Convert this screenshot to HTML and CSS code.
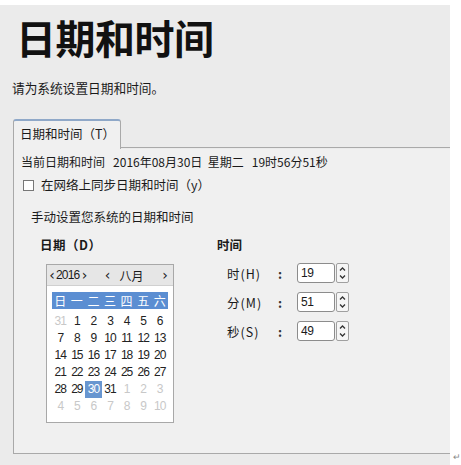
FILE: index.html
```html
<!DOCTYPE html>
<html lang="zh-CN">
<head>
<meta charset="utf-8">
<title>日期和时间</title>
<link rel="stylesheet" href="styles.css">
</head>
<body>
<div class="page">
  <div class="window">
    <h1 class="title">日期和时间</h1>
    <p class="subtitle">请为系统设置日期和时间。</p>
    <div class="tabs">
      <div class="tab">日期和时间（T）</div>
      <div class="tab-rest"></div>
    </div>
    <div class="panel">
      <div class="current">当前日期和时间&nbsp;&nbsp;&nbsp;2016年08月30日&nbsp;&nbsp;星期二&nbsp;&nbsp;&nbsp;19时56分51秒</div>
      <label class="sync"><span class="checkbox"></span><span>在网络上同步日期和时间（y）</span></label>
      <div class="manual">手动设置您系统的日期和时间</div>
      <div class="columns">
        <div class="date-col">
          <div class="heading">日期（D）</div>
          <div class="calendar">
            <div class="cal-head">
              <span class="chev">‹</span><span class="year">2016</span><span class="chev">›</span>
              <span class="chev gap">‹</span><span class="month">八月</span><span class="chev end">›</span>
            </div>
            <div class="grid weekdays">
              <span>日</span><span>一</span><span>二</span><span>三</span><span>四</span><span>五</span><span>六</span>
            </div>
            <div class="grid days">
              <span class="off">31</span><span>1</span><span>2</span><span>3</span><span>4</span><span>5</span><span>6</span>
              <span>7</span><span>8</span><span>9</span><span>10</span><span>11</span><span>12</span><span>13</span>
              <span>14</span><span>15</span><span>16</span><span>17</span><span>18</span><span>19</span><span>20</span>
              <span>21</span><span>22</span><span>23</span><span>24</span><span>25</span><span>26</span><span>27</span>
              <span>28</span><span>29</span><span class="sel">30</span><span>31</span><span class="off">1</span><span class="off">2</span><span class="off">3</span>
              <span class="off">4</span><span class="off">5</span><span class="off">6</span><span class="off">7</span><span class="off">8</span><span class="off">9</span><span class="off">10</span>
            </div>
          </div>
        </div>
        <div class="time-col">
          <div class="heading">时间</div>
          <div class="time-rows">
            <div class="trow">
              <span class="tname">时(H)</span><span class="colon">:</span>
              <span class="input">19</span>
              <span class="spin"><svg viewBox="0 0 13 20" width="13" height="20"><path d="M4 7.5 L6.5 5 L9 7.5" fill="none" stroke="#333" stroke-width="1.3"/><path d="M4 12.5 L6.5 15 L9 12.5" fill="none" stroke="#333" stroke-width="1.3"/></svg></span>
            </div>
            <div class="trow">
              <span class="tname">分(M)</span><span class="colon">:</span>
              <span class="input">51</span>
              <span class="spin"><svg viewBox="0 0 13 20" width="13" height="20"><path d="M4 7.5 L6.5 5 L9 7.5" fill="none" stroke="#333" stroke-width="1.3"/><path d="M4 12.5 L6.5 15 L9 12.5" fill="none" stroke="#333" stroke-width="1.3"/></svg></span>
            </div>
            <div class="trow">
              <span class="tname">秒(S)</span><span class="colon">:</span>
              <span class="input">49</span>
              <span class="spin"><svg viewBox="0 0 13 20" width="13" height="20"><path d="M4 7.5 L6.5 5 L9 7.5" fill="none" stroke="#333" stroke-width="1.3"/><path d="M4 12.5 L6.5 15 L9 12.5" fill="none" stroke="#333" stroke-width="1.3"/></svg></span>
            </div>
          </div>
        </div>
      </div>
    </div>
  </div>
  <span class="mark">↵</span>
</div>
</body>
</html>
```
FILE: styles.css
```css
html, body {
  margin: 0;
  padding: 0;
  background: #ffffff;
}
body {
  font-family: "Noto Sans CJK SC", "Liberation Sans", sans-serif;
  font-size: 12px;
  color: #1a1a1a;
}
.page {
  display: flex;
  align-items: flex-end;
  width: 461px;
  height: 465px;
}
.window {
  width: 452px;
  height: 460px;
  background: #ebebeb;
  box-sizing: border-box;
  padding-top: 10px;
}
.title {
  margin: 0 0 0 16px;
  font-size: 40px;
  font-weight: bold;
  line-height: 44px;
  color: #111;
  letter-spacing: -0.5px;
}
.subtitle {
  margin: 21px 0 0 12px;
  font-size: 12.7px;
  line-height: 16px;
}
.tabs {
  display: flex;
  margin-top: 23px;
  margin-left: 13px;
  height: 30px;
}
.tab {
  width: 108px;
  height: 30px;
  box-sizing: border-box;
  background: #f0f0f0;
  border: 1px solid #a9a9a9;
  border-top: 2px solid #8fa8c8;
  border-bottom: none;
  border-radius: 3px 3px 0 0;
  padding: 4px 0 0 6px;
  font-size: 12.5px;
  line-height: 18px;
  position: relative;
  z-index: 1;
}
.tab-rest {
  flex: 1;
  border-bottom: 1px solid #a9a9a9;
  height: 28px;
}
.panel {
  margin-left: 13px;
  height: 299px;
  background: #f0f0f0;
  border-left: 1px solid #a9a9a9;
  border-bottom: 1px solid #a9a9a9;
  padding: 5px 0 0 7px;
}
.current {
  line-height: 16px;
}
.sync {
  display: flex;
  align-items: center;
  margin-top: 7px;
  margin-left: 2px;
  line-height: 16px;
  font-size: 12.5px;
}
.checkbox {
  width: 11px;
  height: 11px;
  box-sizing: border-box;
  border: 1px solid #777;
  background: #fff;
  margin-right: 7px;
}
.manual {
  margin-top: 16px;
  margin-left: 10px;
  line-height: 16px;
  font-size: 12.5px;
}
.columns {
  display: flex;
  margin-top: 12px;
}
.heading {
  font-weight: bold;
  font-size: 12.5px;
  line-height: 16px;
}
.date-col {
  width: 181px;
  padding-left: 19px;
  box-sizing: border-box;
}
.date-col .heading {
  letter-spacing: 0.5px;
}
.calendar {
  margin-top: 11px;
  margin-left: 6px;
  width: 128px;
  height: 159px;
  box-sizing: border-box;
  border: 1px solid #a8a8a8;
  background: #fff;
  padding: 0 5px;
}
.cal-head {
  display: flex;
  align-items: center;
  height: 20px;
  margin: 0 -5px;
  padding: 0 4px 0 1px;
  background: #e6e6e6;
  border-bottom: 1px solid #d0d0d0;
  font-family: "Noto Sans CJK SC", sans-serif;
  font-size: 12px;
}
.cal-head .year {
  font-family: "Liberation Sans", sans-serif;
  letter-spacing: -0.8px;
  margin: 0 1px 0 0;
}
.chev {
  font-family: "DejaVu Sans", sans-serif;
  font-size: 14px;
  line-height: 16px;
  width: 8px;
  text-align: center;
}
.chev.gap {
  margin-left: 15px;
}
.month {
  margin-left: 8px;
}
.chev.end {
  margin-left: auto;
}
.grid {
  display: grid;
  grid-template-columns: repeat(7, 1fr);
  text-align: center;
}
.weekdays {
  margin-top: 6px;
  background: #5b8ed2;
  color: #fff;
  height: 17px;
  line-height: 17px;
  font-size: 12px;
}
.days {
  margin-top: 4px;
  grid-auto-rows: 17px;
  font-family: "Liberation Sans", sans-serif;
  font-size: 12px;
  line-height: 17px;
  letter-spacing: -1px;
  color: #222;
}
.days .off {
  color: #c8c8c8;
}
.days .sel {
  background: #6896d0;
  color: #fff;
}
.time-col {
  padding-left: 15px;
}
.time-rows {
  margin-top: 10px;
  display: flex;
  flex-direction: column;
  gap: 9px;
  margin-left: 10px;
}
.trow {
  display: flex;
  align-items: center;
  height: 20px;
}
.tname {
  width: 51px;
  font-size: 12.5px;
  letter-spacing: 1px;
}
.colon {
  width: 19px;
  font-size: 12.5px;
  font-weight: bold;
  color: #333;
}
.input {
  width: 38px;
  height: 20px;
  box-sizing: border-box;
  border: 1px solid #8c8c8c;
  border-radius: 3px;
  background: #fff;
  font-family: "Liberation Sans", sans-serif;
  font-size: 12px;
  line-height: 18px;
  padding-left: 3px;
  letter-spacing: -0.5px;
}
.spin {
  width: 13px;
  height: 20px;
  margin-left: 1px;
  box-sizing: border-box;
  border: 1px solid #a0a0a0;
  border-radius: 2px;
  background: #f6f6f6;
  display: flex;
}
.spin svg {
  display: block;
  margin: -1px;
}
.mark {
  font-size: 9px;
  color: #888;
  margin-left: 3px;
  line-height: 10px;
  margin-bottom: 3px;
}
```
